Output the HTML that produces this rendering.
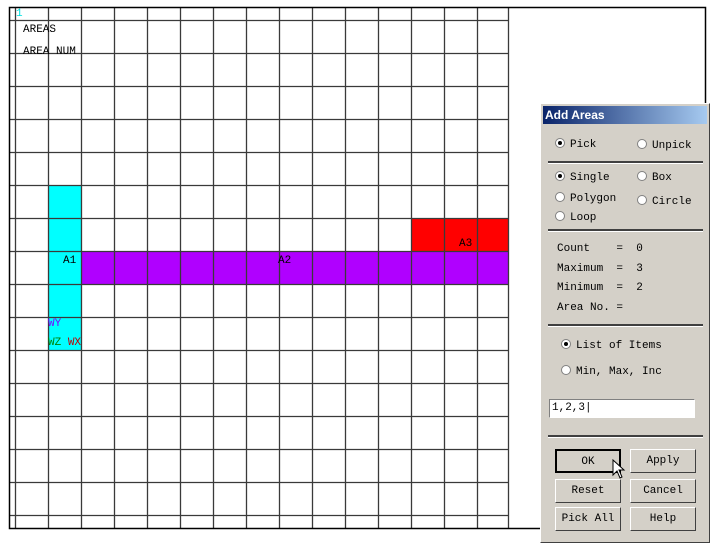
<!DOCTYPE html>
<html><head><style>
body{margin:0;width:720px;height:546px;background:#fff;position:relative;overflow:hidden;font-family:"Liberation Mono",monospace;}
.abs{position:absolute}
.t{position:absolute;font-size:11px;color:#000;font-family:"Liberation Mono",monospace}
.dlg{position:absolute;left:540px;top:103px;width:170px;height:440px;background:#d4d0c8;border:1px solid #fff;border-right-color:#404040;border-bottom-color:#404040;box-sizing:border-box}
.title{position:absolute;left:2px;top:2px;right:2px;height:18px;background:linear-gradient(90deg,#0a246a,#a6caf0);color:#fff;font:bold 12px "Liberation Sans",sans-serif;line-height:18px;padding-left:2px}
.r{position:absolute;font-size:11px;font-family:"Liberation Mono",monospace;color:#000}
.r i{display:inline-block;width:10px;height:10px;border-radius:50%;background:#fff;border:1px solid #808080;box-sizing:border-box;vertical-align:-1px;margin-right:5px;position:relative}
.r i.on::after{content:"";position:absolute;left:2px;top:2px;width:4px;height:4px;border-radius:50%;background:#000}
.hr{position:absolute;left:7px;width:155px;height:2px;background:#404040;border-bottom:1px solid #fff}
.btn{position:absolute;width:66px;height:24px;border:1px solid #fff;border-right-color:#404040;border-bottom-color:#404040;box-sizing:border-box;font-size:11px;text-align:center;line-height:22px;font-family:"Liberation Mono",monospace}
</style></head><body>
<svg class="abs" style="left:0;top:0" width="720" height="546">
<rect x="48" y="185" width="33" height="165" fill="#00ffff"/>
<rect x="81" y="251" width="427" height="33" fill="#b000ff"/>
<rect x="411" y="218" width="97" height="33" fill="#ff0000"/>
<g stroke="#3a3a3a" stroke-width="1.3">
<line x1="15.5" y1="7" x2="15.5" y2="528"/>
<line x1="48.5" y1="7" x2="48.5" y2="528"/><line x1="81.5" y1="7" x2="81.5" y2="528"/>
<line x1="114.5" y1="7" x2="114.5" y2="528"/><line x1="147.5" y1="7" x2="147.5" y2="528"/>
<line x1="180.5" y1="7" x2="180.5" y2="528"/><line x1="213.5" y1="7" x2="213.5" y2="528"/>
<line x1="246.5" y1="7" x2="246.5" y2="528"/><line x1="279.5" y1="7" x2="279.5" y2="528"/>
<line x1="312.5" y1="7" x2="312.5" y2="528"/><line x1="345.5" y1="7" x2="345.5" y2="528"/>
<line x1="378.5" y1="7" x2="378.5" y2="528"/><line x1="411.5" y1="7" x2="411.5" y2="528"/>
<line x1="444.5" y1="7" x2="444.5" y2="528"/><line x1="477.5" y1="7" x2="477.5" y2="528"/>
<line x1="508.5" y1="7" x2="508.5" y2="528"/>
<line x1="9" y1="20.5" x2="508" y2="20.5"/><line x1="9" y1="53.5" x2="508" y2="53.5"/>
<line x1="9" y1="86.5" x2="508" y2="86.5"/><line x1="9" y1="119.5" x2="508" y2="119.5"/>
<line x1="9" y1="152.5" x2="508" y2="152.5"/><line x1="9" y1="185.5" x2="508" y2="185.5"/>
<line x1="9" y1="218.5" x2="508" y2="218.5"/><line x1="9" y1="251.5" x2="508" y2="251.5"/>
<line x1="9" y1="284.5" x2="508" y2="284.5"/><line x1="9" y1="317.5" x2="508" y2="317.5"/>
<line x1="9" y1="350.5" x2="508" y2="350.5"/><line x1="9" y1="383.5" x2="508" y2="383.5"/>
<line x1="9" y1="416.5" x2="508" y2="416.5"/><line x1="9" y1="449.5" x2="508" y2="449.5"/>
<line x1="9" y1="482.5" x2="508" y2="482.5"/><line x1="9" y1="515.5" x2="508" y2="515.5"/>
</g>
<rect x="9.5" y="7.5" width="696" height="521" fill="none" stroke="#000" stroke-width="1.5"/>
</svg>
<div class="t" style="left:16px;top:8px;color:#00e0e0">1</div>
<div class="t" style="left:23px;top:24px">AREAS</div>
<div class="t" style="left:23px;top:46px">AREA NUM</div>
<div class="t" style="left:63px;top:255px">A1</div>
<div class="t" style="left:278px;top:255px">A2</div>
<div class="t" style="left:459px;top:238px">A3</div>
<div class="t" style="left:48px;top:318px;color:#8000ff">WY</div>
<div class="t" style="left:48px;top:337px;color:#008000">WZ <span style="color:#c00000">WX</span></div>
<div class="dlg">
<div class="title">Add Areas</div>
<div class="r" style="left:14px;top:34px"><i class="on"></i>Pick</div>
<div class="r" style="left:96px;top:35px"><i></i>Unpick</div>
<div class="hr" style="top:57px"></div>
<div class="r" style="left:14px;top:67px"><i class="on"></i>Single</div>
<div class="r" style="left:96px;top:67px"><i></i>Box</div>
<div class="r" style="left:14px;top:88px"><i></i>Polygon</div>
<div class="r" style="left:96px;top:91px"><i></i>Circle</div>
<div class="r" style="left:14px;top:107px"><i></i>Loop</div>
<div class="hr" style="top:125px"></div>
<div class="r" style="left:16px;top:139px;white-space:pre">Count    =  0</div>
<div class="r" style="left:16px;top:159px;white-space:pre">Maximum  =  3</div>
<div class="r" style="left:16px;top:178px;white-space:pre">Minimum  =  2</div>
<div class="r" style="left:16px;top:198px;white-space:pre">Area No. =</div>
<div class="hr" style="top:220px"></div>
<div class="r" style="left:20px;top:235px"><i class="on"></i>List of Items</div>
<div class="r" style="left:20px;top:261px"><i></i>Min, Max, Inc</div>
<div class="abs" style="left:8px;top:295px;width:146px;height:19px;background:#fff;border:1px solid #808080;border-right-color:#fff;border-bottom-color:#fff;box-sizing:border-box;font-size:11px;line-height:17px;padding-left:2px">1,2,3|</div>
<div class="hr" style="top:331px"></div>
<div class="btn" style="left:14px;top:345px;border:2px solid #000">OK</div>
<div class="btn" style="left:89px;top:345px">Apply</div>
<div class="btn" style="left:14px;top:375px">Reset</div>
<div class="btn" style="left:89px;top:375px">Cancel</div>
<div class="btn" style="left:14px;top:403px">Pick All</div>
<div class="btn" style="left:89px;top:403px">Help</div>
<svg class="abs" style="left:71px;top:355px" width="14" height="22"><path d="M1 1 L1 16 L5 12 L8 19 L10 18 L7 11 L12 11 Z" fill="#fff" stroke="#000"/></svg>
</div>
</body></html>
